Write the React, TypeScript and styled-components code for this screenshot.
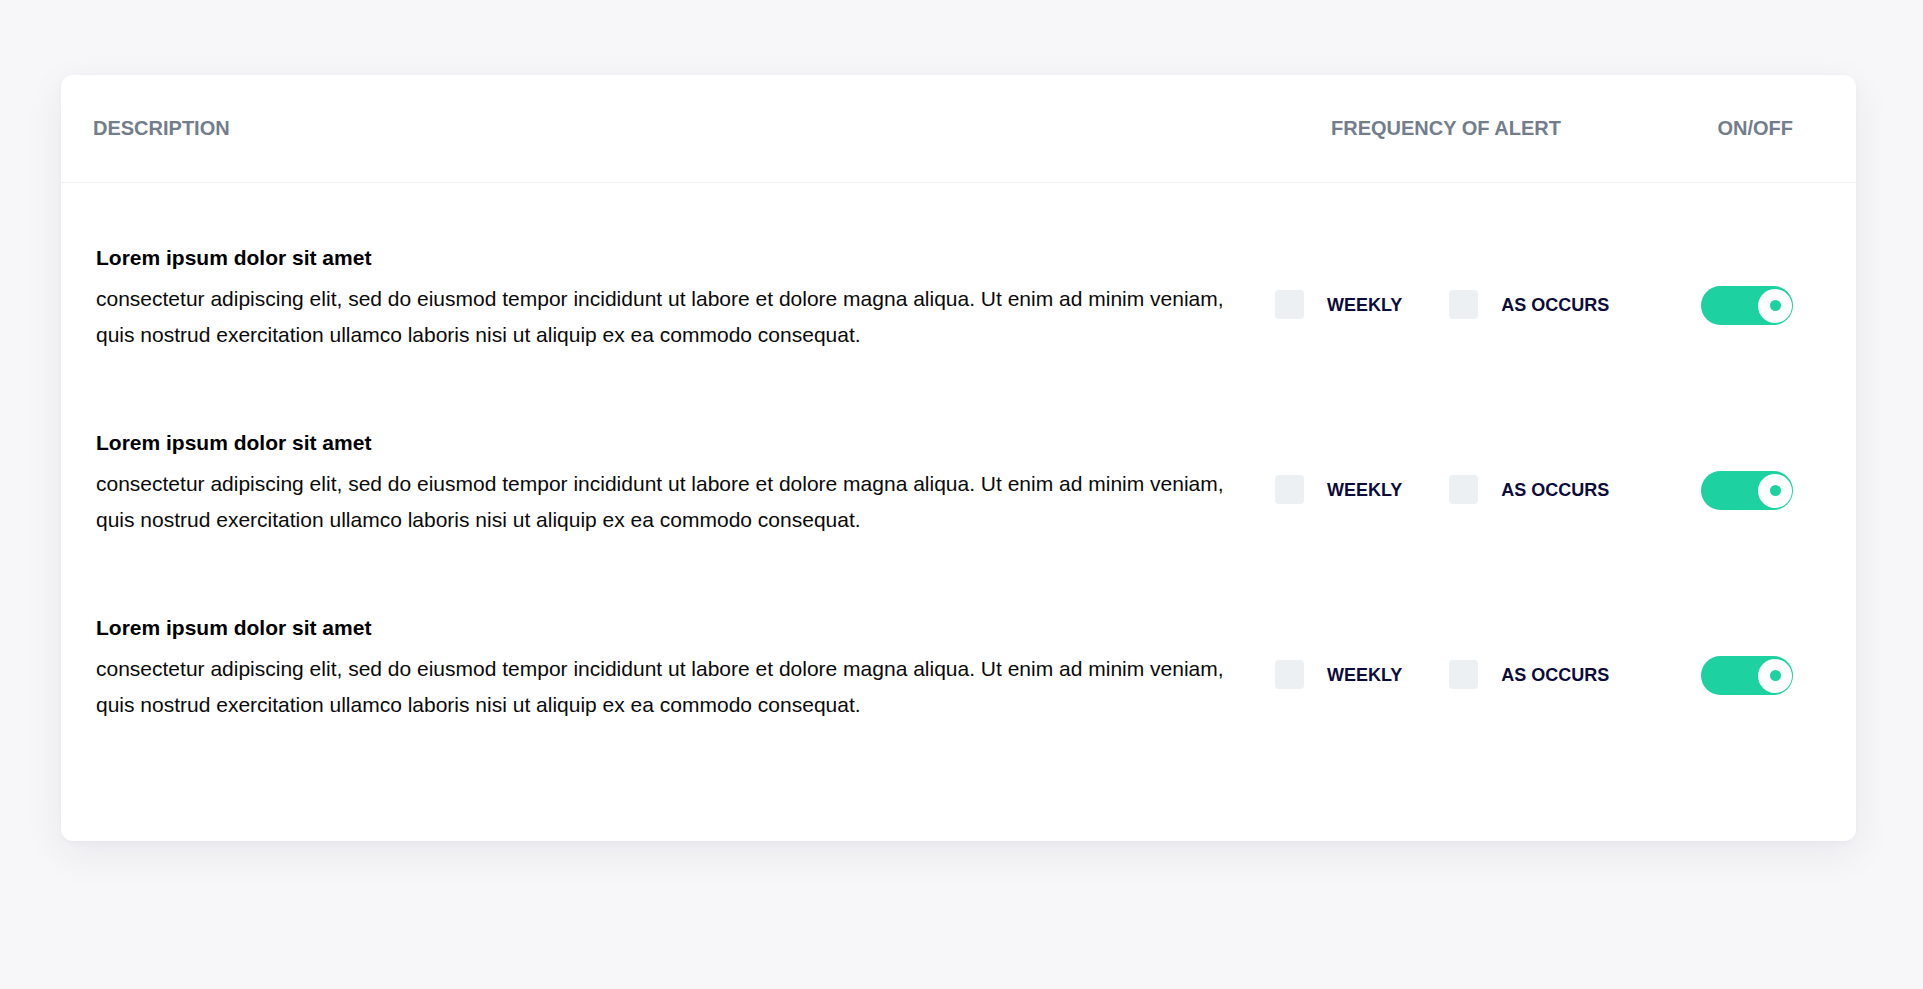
import React from "react";
import styled, { createGlobalStyle } from "styled-components";

const GlobalStyle = createGlobalStyle`
  html, body {
    margin: 0;
    padding: 0;
    background: #f7f7f9;
    font-family: "Liberation Sans", Arial, Helvetica, sans-serif;
    -webkit-font-smoothing: antialiased;
  }
  * { box-sizing: border-box; }
`;

const COLUMNS = "1179px 425px 93px";

const Page = styled.div`
  min-height: 989px;
  padding: 75px 67px 0 61px;
`;

const Card = styled.section`
  background: #ffffff;
  border-radius: 12px;
  box-shadow: 0 12px 40px rgba(40, 40, 80, 0.07), 0 2px 6px rgba(40, 40, 80, 0.03);
  padding-bottom: 118px;
`;

const HeaderRow = styled.div`
  display: grid;
  grid-template-columns: 1182px 425px 93px;
  align-items: center;
  height: 108px;
  padding: 0 63px 0 32px;
  border-bottom: 1px solid #f0f1f4;
`;

const HeaderCell = styled.div<{ $offset?: number; $align?: "start" | "end" }>`
  font-size: 20px;
  font-weight: 700;
  color: #737d8c;
  text-transform: uppercase;
  padding-left: ${(p) => p.$offset ?? 0}px;
  justify-self: ${(p) => p.$align ?? "start"};
  white-space: nowrap;
`;

const Body = styled.div`
  display: flex;
  flex-direction: column;
  gap: 75px;
  padding: 60px 63px 0 35px;
`;

const Row = styled.div`
  display: grid;
  grid-template-columns: ${COLUMNS};
  align-items: start;
`;

const Description = styled.div`
  padding-right: 29px;
`;

const Title = styled.h3`
  margin: 0 0 8px;
  font-size: 21px;
  line-height: 30px;
  font-weight: 700;
  color: #000000;
`;

const Text = styled.p`
  margin: 0;
  font-size: 21px;
  line-height: 36px;
  color: #0a0a0a;
`;

const ControlLine = styled.div<{ $justify?: string }>`
  display: flex;
  align-items: center;
  justify-content: ${(p) => p.$justify ?? "flex-start"};
  height: 39px;
  margin-top: 43px;
  gap: 47px;
`;

const Option = styled.label`
  display: flex;
  align-items: center;
  gap: 23px;
  cursor: pointer;
`;

const CheckBox = styled.span`
  display: block;
  width: 29px;
  height: 29px;
  border-radius: 4px;
  background: #edf0f3;
  margin-top: -3px;
`;

const OptionLabel = styled.span`
  font-size: 18px;
  font-weight: 700;
  color: #0c0b3a;
  text-transform: uppercase;
  white-space: nowrap;
`;

const Toggle = styled.button<{ $on: boolean }>`
  position: relative;
  width: 92px;
  height: 39px;
  border: none;
  padding: 0;
  border-radius: 20px;
  background: ${(p) => (p.$on ? "#1dd1a1" : "#dfe3e8")};
  cursor: pointer;
`;

const Knob = styled.span<{ $on: boolean }>`
  position: absolute;
  top: 50%;
  ${(p) => (p.$on ? "right: 1px;" : "left: 1px;")}
  width: 34px;
  height: 34px;
  margin-top: -17px;
  border-radius: 50%;
  background: #ffffff;
  display: flex;
  align-items: center;
  justify-content: center;
`;

const KnobDot = styled.span`
  width: 11px;
  height: 11px;
  border-radius: 50%;
  background: #1dd1a1;
`;

const rows = [1, 2, 3].map((id) => ({
  id,
  title: "Lorem ipsum dolor sit amet",
  text:
    "consectetur adipiscing elit, sed do eiusmod tempor incididunt ut labore et dolore magna aliqua. Ut enim ad minim veniam, quis nostrud exercitation ullamco laboris nisi ut aliquip ex ea commodo consequat.",
  on: true,
}));

export default function App() {
  return (
    <>
      <GlobalStyle />
      <Page>
        <Card>
          <HeaderRow>
            <HeaderCell>Description</HeaderCell>
            <HeaderCell $offset={56}>Frequency of alert</HeaderCell>
            <HeaderCell $align="end">On/Off</HeaderCell>
          </HeaderRow>
          <Body>
            {rows.map((r) => (
              <Row key={r.id}>
                <Description>
                  <Title>{r.title}</Title>
                  <Text>{r.text}</Text>
                </Description>
                <ControlLine>
                  <Option>
                    <CheckBox />
                    <OptionLabel>Weekly</OptionLabel>
                  </Option>
                  <Option>
                    <CheckBox />
                    <OptionLabel>As occurs</OptionLabel>
                  </Option>
                </ControlLine>
                <ControlLine $justify="flex-end">
                  <Toggle $on={r.on} aria-label="toggle">
                    <Knob $on={r.on}>
                      <KnobDot />
                    </Knob>
                  </Toggle>
                </ControlLine>
              </Row>
            ))}
          </Body>
        </Card>
      </Page>
    </>
  );
}
